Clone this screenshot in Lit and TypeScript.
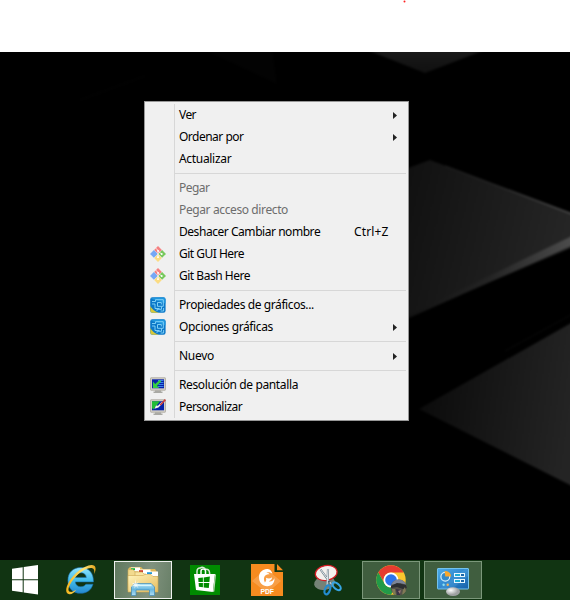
import { LitElement, html, css, svg, nothing } from "lit";
import { customElement, property } from "lit/decorators.js";

type IconName = "git" | "graphics" | "resolution" | "personalize";

interface Entry {
  label: string;
  width: number;
  icon?: IconName;
  arrow?: boolean;
  disabled?: boolean;
  shortcut?: string;
}

const groups: Entry[][] = [
  [
    { label: "Ver", width: 17, arrow: true },
    { label: "Ordenar por", width: 64.5, arrow: true },
    { label: "Actualizar", width: 52.3 },
  ],
  [
    { label: "Pegar", width: 30.5, disabled: true },
    { label: "Pegar acceso directo", width: 109, disabled: true },
    { label: "Deshacer Cambiar nombre", width: 141.2, shortcut: "Ctrl+Z" },
    { label: "Git GUI Here", width: 65, icon: "git" },
    { label: "Git Bash Here", width: 71, icon: "git" },
  ],
  [
    { label: "Propiedades de gráficos...", width: 134.8, icon: "graphics" },
    { label: "Opciones gráficas", width: 94, icon: "graphics", arrow: true },
  ],
  [{ label: "Nuevo", width: 35, arrow: true }],
  [
    { label: "Resolución de pantalla", width: 119, icon: "resolution" },
    { label: "Personalizar", width: 63.2, icon: "personalize" },
  ],
];

const monitor = svg`
  <path d="M5 13h6v1.5h1.5V16h-9v-1.5H5z" fill="#a9a9a4"/>
  <rect x=".5" y=".8" width="15" height="12.4" rx=".5" fill="#d2d0c8" stroke="#b4b1a9"/>
  <rect x="2" y="2.3" width="12" height="9" fill="#0822a8"/>`;

const menuIcons = {
  git: svg`
    <path d="M8 0l3.9 3.9L8 7.8 4.1 3.9z" fill="#f58080"/>
    <path d="M3.9 4l3.9 3.9-3.9 3.9L0 7.9z" fill="#75a7f5"/>
    <path d="M12.1 4L16 7.9l-3.9 3.9-3.9-3.9z" fill="#78c95c"/>
    <path d="M8 8.2l3.9 3.9L8 16l-3.9-3.9z" fill="#fbdc83"/>
    <path d="M5.9 2.2l2.1 2.3v7M8.2 5l3.3 3" fill="none" stroke="#fff" stroke-width=".8"/>
    <circle cx="8" cy="4.8" r=".9" fill="#fff"/><circle cx="11.7" cy="8" r="1" fill="#fff"/><circle cx="8" cy="11.2" r=".9" fill="#fff"/>`,
  graphics: svg`
    <rect x=".2" y=".2" width="15.4" height="15.6" rx="2.2" fill="#0c78c8"/>
    <path d="M.3 9v4.5q0 2.3 2.3 2.3H9Q3 14 .3 9z" fill="#d9c838"/>
    <path d="M.5 1.5L6 .4h8q1.5.3 1.5 2v4z" fill="#2096dd"/>
    <g fill="none" stroke="#8bd8fa" stroke-width=".9">
      <path d="M2 4.5h3.5V2.7h7.8v6.6H7.5V5.5h3.8v2M2 7h3v4.5h4.5M11.5 9.5v2.8H7v1.6M13.6 11v3h-3"/>
    </g>`,
  resolution: svg`${monitor}
    <path d="M8 3.5h5.5M9.5 5.5h4M8.5 7.5h5M8 9.5h5.5" stroke="#3f91ee" stroke-width=".9"/>
    <path d="M3 4.5V11h6.2L7 8.8l4.3-4.2-1.7-1.7L5.2 7z" fill="#35ce43"/>`,
  personalize: svg`${monitor}
    <path d="M2 2.3h8L5 8.5 3.5 10.5 2 9z" fill="#22bd36"/>
    <path d="M4.5 9.8L6 6.5l2 .2L11.5 3l1.3 1.2L8.4 8.4z" fill="#f2f3ed"/>
    <path d="M9.5 5.7L14.8 0 16 1.2l-5.2 5.3z" fill="#cd3c39"/>`,
};

@customElement("fit-label")
export class FitLabel extends LitElement {
  @property() text = "";
  @property({ type: Number }) width = 0;

  static styles = css`
    :host { display: block; white-space: nowrap; }
    .text { display: inline-block; }
  `;

  render() {
    return html`<span class="text">${this.text}</span>`;
  }

  // Keeps every label at its nominal width whichever fallback font is used.
  updated() {
    const span = this.renderRoot.querySelector<HTMLElement>(".text")!;
    span.style.letterSpacing = "0px";
    const natural = span.getBoundingClientRect().width;
    span.style.letterSpacing = `${(this.width - natural) / this.text.length}px`;
  }
}

@customElement("context-menu")
export class ContextMenu extends LitElement {
  static styles = css`
    :host {
      display: block;
      box-sizing: border-box;
      width: 265px;
      padding: 2px;
      border: 1px solid #979797;
      background: linear-gradient(#d7d7d7, #d7d7d7) 29px 2px / 1px 314px no-repeat #f0f0f0;
      font: 12px/22px "Noto Sans", "Open Sans", sans-serif;
      color: #000;
    }
    .group + .group { border-top: 1px solid #d7d7d7; }
    .group { margin-left: 28px; }
    .group + .group { margin-top: 3px; padding-top: 3px; }
    .row { display: flex; align-items: center; height: 22px; margin-left: -28px; }
    .gutter { width: 32px; height: 16px; flex: none; padding-left: 3px; box-sizing: border-box; }
    .disabled { color: #6d6d6d; }
    .label { flex: 1; }
    .shortcut { width: 52px; flex: none; }
    .arrow { width: 4px; height: 7px; margin-right: 9px; display: block; }
    svg { display: block; }
  `;

  row(e: Entry) {
    return html`<div class="row ${e.disabled ? "disabled" : ""}">
      <div class="gutter">
        ${e.icon ? html`<svg width="16" height="16" viewBox="0 0 16 16">${menuIcons[e.icon]}</svg>` : nothing}
      </div>
      <fit-label class="label" .text=${e.label} .width=${e.width}></fit-label>
      ${e.shortcut ? html`<fit-label class="shortcut" .text=${e.shortcut} .width=${34.5}></fit-label>` : nothing}
      ${e.arrow ? html`<svg class="arrow" viewBox="0 0 4 7"><path d="M0 0l4 3.5L0 7z" fill="#222"/></svg>` : nothing}
    </div>`;
  }

  render() {
    return groups.map((g) => html`<div class="group">${g.map((e) => this.row(e))}</div>`);
  }
}

const apps = {
  start: svg`<path d="M12 8.8l10.7-1.5v12H12zM23.7 7.1L38 5v14.3H23.7zM12 20.3h10.7v12L12 30.7zM23.7 20.3H38v14.2l-14.3-2.1z" fill="#fff"/>`,
  ie: svg`
    <defs>
      <linearGradient id="ie" x2="0" y2="1"><stop stop-color="#92e5fc"/><stop offset=".5" stop-color="#43bdeb"/><stop offset="1" stop-color="#2588cf"/></linearGradient>
      <linearGradient id="ring" x2="1" y2="0"><stop stop-color="#f4b51c"/><stop offset=".6" stop-color="#ffe477"/><stop offset="1" stop-color="#e4a51c"/></linearGradient>
    </defs>
    <path fill-rule="evenodd" d="M28.9 7.5c7.5 0 12.9 5.3 12.6 14.4H23.3c.3 3.2 2.5 4.8 5.6 4.8 2.5 0 4-.9 4.9-2.5h7.2c-1.7 5.9-6.2 9.1-12.4 9.1-7.6 0-12.7-5-12.7-12.9 0-7.9 5.2-12.9 13-12.9zM23.4 17.4h10.9c-.3-2.9-2.4-4.6-5.3-4.6s-5 1.7-5.6 4.6z" fill="url(#ie)" stroke="#176dad" stroke-width=".6"/>
    <path d="M17.4 34.3c-4.3-.8-4-6-.6-12C21.5 13.3 32 5.6 39.4 5c4.7-.2 5.2 4.2 2.8 8.9.6-4-.4-6-3.2-6C33.7 7.9 24.5 14 19.5 22c-3.4 5.4-4.1 9.2-1.4 9.8 1.8.4 3.9-.5 6.1-2-2.1 3-4.5 4.8-6.8 4.5z" fill="url(#ring)"/>`,
  explorer: svg`
    <defs>
      <linearGradient id="folder" x2="1" y2="1"><stop stop-color="#fff4bc"/><stop offset="1" stop-color="#e7bd5f"/></linearGradient>
      <linearGradient id="stand" x2="0" y2="1"><stop stop-color="#b3e5f7"/><stop offset=".5" stop-color="#68b7df"/><stop offset="1" stop-color="#b2def3"/></linearGradient>
    </defs>
    <path d="M16 7h11l2 2h12l2 3v14H14V9z" fill="#dfb95b"/>
    <path d="M17 7.5h9v4h-9z" fill="#fff"/><path d="M17 8.2h4v2h-4z" fill="#15ae36"/>
    <path d="M14 12V9.6h5L21 12h5v18H14z" fill="#f2da8e" stroke="#cfa750" stroke-width=".6"/>
    <path d="M24.5 9.5h12v5h-12z" fill="#fff"/><path d="M25 10.2h4v2h-4z" fill="#cf3726"/>
    <path d="M21 14V12h7l2 2h7v16H21z" fill="#f8e5a2" stroke="#cfa750" stroke-width=".6"/>
    <path d="M32 11.5h12v5H32z" fill="#fff"/><path d="M33 12.2h5v1.8h-5z" fill="#2396d6"/>
    <path d="M14 32V15.5h15l2-1h6l2 2h5V32z" fill="url(#folder)" stroke="#cea853" stroke-width=".6"/>
    <path d="M17.5 35.5V27l3-3.5h16.7l3.3 3.5v8.5h-5V30H22v5.5z" fill="url(#stand)" stroke="#3e89b8" stroke-width=".7"/>
    <path d="M20.5 25.5h17" stroke="#d8f5fc" stroke-width="1.2"/>
    <path d="M21.5 19l.6 4.4 3-2.2-2.2 3 4 .4-4 .7 1.8 3.2-2.8-2.4-1.4 2.7.1-3-4 1 3.2-2.2-2.4-1.9 3.4.6z" fill="#fff" opacity=".7"/>`,
  store: svg`
    <path d="M14 5h30v30H14z" fill="#008b00"/>
    <path d="M21 15v-3.5c0-2.4 1.3-3.6 3.2-3.4 1.5-1.6 4.6-.8 5.4 1.4 2-.8 3.9.8 4 3.5v2" fill="none" stroke="#d7e8d4" stroke-width="1.5"/>
    <path d="M25 14.5V11c.2-2.7 4.3-2.7 4.5 0v3.5" fill="none" stroke="#fff" stroke-width="1.5"/>
    <path d="M18 14h21l-2.2 18L20 30z" fill="#fff"/><path d="M39 14l1 .7-1.7 16.8-1.5.5z" fill="#b7d5b3"/>
    <path d="M22.2 18.1l4.7-.6v4.6h-4.4zM27.7 17.4l6.2-.8-.5 5.5h-5.7zM22.6 22.9h4.3v4.4l-4-.6zM27.7 22.9h5.6l-.5 5.2-5.1-.7z" fill="#008b00"/>`,
  pdf: svg`
    <path d="M13 4h23.5v8H45v24H13z" fill="#f68b1f"/><path d="M39 4l6 6.3h-6z" fill="#f68b1f"/>
    <path d="M14 21L28 9l15 12-14 12z" fill="#faae60" opacity=".6"/>
    <path d="M29.8 9c-5-.4-8.9 3.3-8.8 8.3 0 5.5 3.6 9 8.3 8.9 4.7-.2 7.3-3.2 7.2-8-1.2 2.5-3.6 3.9-5.7 3 2-.5 3.3-2 3.3-3.9-1.8 1.5-4.3 1.5-6.1.4.6 2.4 0 3.4-1.1 4.7-1.6-2.8-1.1-5.8.7-7.1 1.3-.9 2.7-1.2 4-.9-.8-1.1-1.9-1.8-3.3-1.8 1.7-.9 4.5-.4 6.2 1.1-.8-2.7-2.2-4.3-4.7-4.7z" fill="#fff"/>
    <text x="22.4" y="34" class="pdf" textLength="13.6" lengthAdjust="spacingAndGlyphs">PDF</text>`,
  snip: svg`
    <ellipse cx="24.5" cy="23" rx="10.5" ry="6.8" transform="rotate(-10 24.5 23)" fill="#87908a" opacity=".85"/>
    <ellipse cx="26.2" cy="13" rx="11" ry="7.4" transform="rotate(-10 26.2 13)" fill="#f3f1ee" stroke="#d51c24" stroke-width="1.2"/>
    <path d="M20.5 9.5l11.4 15.7M28 9l-.7 17" stroke="#70808b" stroke-width="2.1"/>
    <path d="M20.5 9.5l10.9 14.7M28 9l-.9 16" stroke="#dfe8ec" stroke-width="1"/>
    <ellipse cx="27.4" cy="29.8" rx="2.5" ry="4.7" transform="rotate(20 27.4 29.8)" fill="none" stroke="#238cd0" stroke-width="2.1"/>
    <ellipse cx="36.6" cy="26.2" rx="2.7" ry="5" transform="rotate(-48 36.6 26.2)" fill="none" stroke="#36a5e2" stroke-width="2.1"/>
    <circle cx="29" cy="21.5" r="1" fill="#3b5969"/>`,
  chrome: svg`
    <defs><clipPath id="avatar"><circle cx="36.7" cy="27.5" r="8"/></clipPath></defs>
    <circle cx="29" cy="20" r="14.7" fill="#fbc62e"/>
    <path d="M16.3 12.6A14.7 14.7 0 0 1 41.7 12.6H29a7.3 7.3 0 0 0-6.4 11z" fill="#e63c30"/>
    <path d="M16.3 12.6A14.7 14.7 0 0 0 29 34.7l6.3-11a7.3 7.3 0 0 1-12.7 0z" fill="#229a48"/>
    <circle cx="29" cy="20" r="7.5" fill="#fff"/><circle cx="29" cy="20" r="5.8" fill="#2c74e9"/>
    <g clip-path="url(#avatar)">
      <path d="M28 19h18v17H28z" fill="#55534b"/>
      <path d="M28 19h18v6l-8-2-10 2z" fill="#7c8498"/>
      <path d="M29 26l6-3 9 2 2 3-5 1-6-2-6 1z" fill="#2c2e31"/>
      <path d="M30 29h3l1 6h-3zM41 30l2-3 1 5-4 3z" fill="#807b55"/>
      <path d="M34 29l5 1-1 5h-3z" fill="#393245"/><path d="M36 31l3-1-1 4z" fill="#9d7975"/>
    </g>`,
  control: svg`
    <defs>
      <linearGradient id="panel" x2="1" y2="1"><stop stop-color="#4cadeb"/><stop offset=".5" stop-color="#3188ce"/><stop offset="1" stop-color="#1660a8"/></linearGradient>
      <radialGradient id="knob" cx=".35" cy=".35"><stop stop-color="#fff"/><stop offset="1" stop-color="#9fa1a2"/></radialGradient>
    </defs>
    <rect x="13.5" y="8.5" width="31" height="20.5" rx=".5" fill="url(#panel)" stroke="#73c2ed"/>
    <path d="M15 29L41 9h3v7L28 29z" fill="#6db8e9" opacity=".2"/>
    <circle cx="21.3" cy="16.7" r="4.4" fill="#338bcc" stroke="#d6effa" stroke-width="1.2"/>
    <path d="M21.3 16.5l-.7-5.5q6 0 6.6 5.5z" fill="#f9a72b"/>
    <path d="M30 13h11v4H30zM30 19h11v4H30z" fill="#e6f7ff"/>
    <path d="M31 14h5v2h-5zM31 20h5v2h-5z" fill="#1dabd6"/><path d="M37 14h3v2h-3zM37 20h3v2h-3z" fill="#1a66a9"/>
    <circle cx="19.6" cy="24.8" r="1.2" fill="#89e1f6"/><circle cx="23.7" cy="24.8" r="1.2" fill="#f5b357"/>
    <ellipse cx="29" cy="31.6" rx="7" ry="4.4" fill="url(#knob)"/>`,
};

@customElement("task-bar")
export class TaskBar extends LitElement {
  static styles = css`
    :host {
      display: flex;
      gap: 4px;
      align-items: center;
      height: 40px;
      box-sizing: border-box;
      background: #113412;
    }
    .item { display: flex; width: 58px; height: 40px; flex: none; }
    .item.start { width: 48px; }
    .item.open, .item.active { height: 38px; box-sizing: border-box; border: 1px solid #7b977a; background: #405e3f; }
    .item.active { border-color: #eef1ee; background: linear-gradient(100deg, #60795f, #80927e 60%, #687f67); }
    .open svg, .active svg { margin: -2px -1px; }
    svg { display: block; flex: none; width: 58px; height: 40px; }
    .start svg { width: 48px; }
    .pdf { font: bold 7px "Liberation Sans", sans-serif; fill: #fff; }
  `;

  render() {
    const items: [keyof typeof apps, string][] = [
      ["start", "start"],
      ["ie", ""],
      ["explorer", "active"],
      ["store", ""],
      ["pdf", ""],
      ["snip", ""],
      ["chrome", "open"],
      ["control", "open"],
    ];
    return items.map(
      ([name, state]) => html`<div class="item ${state}">
        <svg viewBox="0 0 ${name === "start" ? 48 : 58} 40">${apps[name]}</svg>
      </div>`
    );
  }
}

@customElement("app-root")
export class AppRoot extends LitElement {
  static styles = css`
    :host { display: flex; flex-direction: column; width: 570px; height: 600px; overflow: hidden; background: #fff; }
    .page { height: 52px; flex: none; }
    .page svg, .wallpaper { display: block; }
    .desktop { display: grid; height: 508px; flex: none; background: #000; }
    .wallpaper, .menu { grid-area: 1 / 1; }
    .menu { margin: 49px 0 0 144px; align-self: start; z-index: 1; }
  `;

  render() {
    return html`
      <div class="page">
        <svg width="570" height="52"><circle cx="404.5" cy="1.5" r="1" fill="#ff2020" /></svg>
      </div>
      <div class="desktop">
        <svg class="wallpaper" width="570" height="508" viewBox="0 52 570 508">
          <defs>
            <linearGradient id="top" x2="0" y2="1"><stop stop-color="#1b1b1b" /><stop offset="1" stop-color="#101010" /></linearGradient>
            <linearGradient id="mid" gradientUnits="userSpaceOnUse" x1="400" y1="210" x2="570" y2="250"><stop stop-color="#111" /><stop offset="1" stop-color="#262626" /></linearGradient>
            <linearGradient id="low" gradientUnits="userSpaceOnUse" x1="420" y1="400" x2="570" y2="420"><stop stop-color="#0b0b0b" /><stop offset="1" stop-color="#242424" /></linearGradient>
            <linearGradient id="edge" gradientUnits="userSpaceOnUse" x1="409" y1="0" x2="570" y2="0"><stop stop-color="#121212" /><stop offset=".5" stop-color="#242424" /><stop offset="1" stop-color="#4b4b4b" /></linearGradient>
            <filter id="soft" x="-5%" y="-5%" width="110%" height="110%" color-interpolation-filters="sRGB"><feGaussianBlur stdDeviation=".8" /></filter>
          </defs>
          <g filter="url(#soft)">
            <path d="M200 48h72l5 36z" fill="#030303" />
            <path d="M80 100l65-24" stroke="#060606" />
            <path d="M362 48h128l-65 25z" fill="url(#top)" />
            <path d="M400 171l30-11 150 57v27L400 320z" fill="url(#mid)" />
            <path d="M445 166l135 51" stroke="url(#edge)" stroke-width="1.5" />
            <path d="M400 319l180-87v10L400 322z" fill="url(#edge)" />
            <path d="M419 409L580 318v172z" fill="url(#low)" />
            <path d="M505 351l75-41" stroke="#0b0b0b" />
          </g>
        </svg>
        <context-menu class="menu"></context-menu>
      </div>
      <task-bar></task-bar>
    `;
  }
}
